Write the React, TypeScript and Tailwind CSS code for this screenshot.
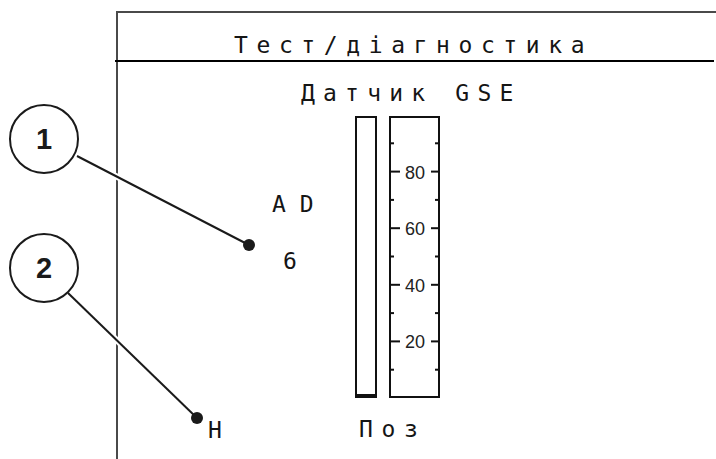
const lcd = "font-['DejaVu_Sans_Mono',monospace] text-[23px] leading-none text-[#151515]";

const ticks = [10, 20, 30, 40, 50, 60, 70, 80, 90];

function Scale() {
  return (
    <svg width="47" height="278" className="block">
      {ticks.map((v) => {
        const y = 280 - v * 2.83;
        const major = v % 20 === 0;
        return (
          <g key={v} stroke="#111" strokeWidth="2">
            <line x1="0" y1={y} x2={major ? 9 : 3} y2={y} />
            <line x1={major ? 40 : 44} y1={y} x2="47" y2={y} />
            {major && (
              <text
                x="24"
                y={y + 1}
                textAnchor="middle"
                dominantBaseline="central"
                stroke="none"
                fill="#222"
                fontSize="18"
                fontFamily="'Liberation Sans', Arial, sans-serif"
              >
                {v}
              </text>
            )}
          </g>
        );
      })}
    </svg>
  );
}

function Callouts() {
  const items = [
    { n: '1', cx: 44, cy: 139, x1: 77, y1: 156, x2: 249, y2: 245 },
    { n: '2', cx: 44, cy: 268, x1: 68, y1: 293, x2: 197, y2: 418 },
  ];
  return (
    <svg width="716" height="459" className="absolute inset-0 pointer-events-none">
      {items.map((c) => (
        <g key={c.n}>
          <line x1={c.x1} y1={c.y1} x2={c.x2} y2={c.y2} stroke="#fff" strokeWidth="6" />
          <line x1={c.x1} y1={c.y1} x2={c.x2} y2={c.y2} stroke="#1a1a1a" strokeWidth="2" />
          <circle cx={c.x2} cy={c.y2} r="6" fill="#1a1a1a" />
          <circle cx={c.cx} cy={c.cy} r="34" fill="#fff" stroke="#1a1a1a" strokeWidth="2" />
          <text
            x={c.cx}
            y={c.cy + 10}
            textAnchor="middle"
            fontSize="29"
            fontWeight="700"
            fontFamily="'Liberation Sans', Arial, sans-serif"
            fill="#1a1a1a"
          >
            {c.n}
          </text>
        </g>
      ))}
    </svg>
  );
}

export default function App() {
  return (
    <div className="relative w-[716px] h-[459px] bg-white overflow-hidden">
      <div className="ml-[116px] mt-[11px] h-[448px] border-l-2 border-t-2 border-[#4a4a4a]">
        <div className={`${lcd} h-[49px] -ml-[3px] mr-[2px] border-b-2 border-black pt-[21px] pl-[119px] tracking-[8.6px]`}>
          Тест/діагностика
        </div>

        <div className={`${lcd} pt-[20px] pl-[183px] tracking-[8.2px] whitespace-pre`}>Датчик GSE</div>

        <div className="grid grid-cols-[237px_auto] mt-[11px]">
          <div className="h-[282px] flex flex-col">
            <div className={`${lcd} pt-[77px] pl-[154px] whitespace-pre`}>A D</div>
            <div className={`${lcd} mt-[34px] pl-[165px]`}>6</div>
          </div>
          <div className="flex items-start gap-[12px]">
            <div className="w-[22px] h-[282px] border-2 border-[#111] flex flex-col justify-end">
              <div className="h-[2px] bg-[#111]" />
            </div>
            <div className="w-[51px] h-[282px] border-2 border-[#111]">
              <Scale />
            </div>
          </div>

          <div className={`${lcd} pt-[21px] pl-[90px]`}>H</div>
          <div className={`${lcd} pt-[20px] pl-[4px] tracking-[8.6px]`}>Поз</div>
        </div>
      </div>
      <Callouts />
    </div>
  );
}
